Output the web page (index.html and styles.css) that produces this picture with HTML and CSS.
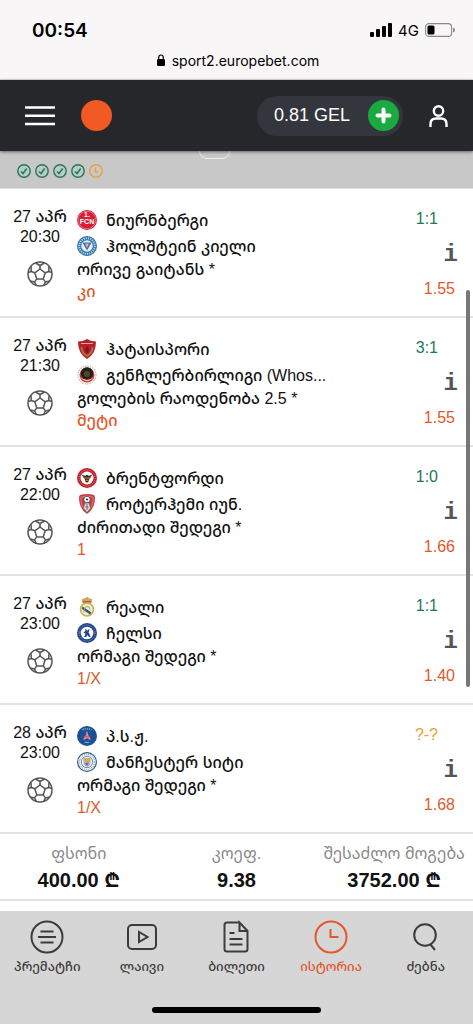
FILE: index.html
```
<!DOCTYPE html>
<html lang="ka">
<head>
    <meta charset="UTF-8">
    <meta name="viewport" content="width=device-width, initial-scale=1.0">
    <title>ისტორია</title>
    <link rel="stylesheet" href="styles.css">
</head>
<body>
    <!-- shared icons -->
    <svg class="sprite" aria-hidden="true">
        <symbol id="ball" viewBox="0 0 26 26">
            <g fill="none" stroke="#555" stroke-width="1.5" stroke-linejoin="round">
                <circle cx="13" cy="13" r="12"/>
                <path d="M13 8l5.2 3.8-2 6.1H9.800l-2-6.100z"/>
                <path d="M13 8V4.500M18.200 11.800l3.500-1.300M16.200 17.900l2.300 3M9.800 17.900l-2.300 3M7.800 11.800l-3.500-1.300"/>
                <path d="M8.500 2l4.500 2.500L17.500 2M24.900 11.500l-3.200-1 .3-5M22.500 20l-4 .9-1.800 3.500M3.500 20l4 .9 1.800 3.500M1.100 11.500l3.200-1-.3-5"/>
            </g>
        </symbol>
        <symbol id="won" viewBox="0 0 14 14">
            <circle cx="7" cy="7" r="6.200" fill="#b5cfc4" stroke="#2b7458" stroke-width="1.400"/>
            <path d="M4 7.500l2 2L9.700 4.500" fill="none" stroke="#2b7458" stroke-width="1.500"/>
        </symbol>
    </svg>

    <div class="status">
        <div class="status-row">
            <span class="clock">00:54</span>
            <div class="signal">
                <svg width="22" height="14" viewBox="0 0 22 14">
                    <rect x="0" y="9" width="4" height="5" rx="1"/>
                    <rect x="6" y="6" width="4" height="8" rx="1"/>
                    <rect x="12" y="3" width="4" height="11" rx="1"/>
                    <rect x="18" y="0" width="4" height="14" rx="1"/>
                </svg>
                <span>4G</span>
                <svg width="30" height="14" viewBox="0 0 30 14">
                    <rect x=".6" y=".6" width="26" height="12.800" rx="3.500" fill="none" stroke="#888" stroke-width="1.100"/>
                    <rect x="2.500" y="2.500" width="7" height="9" rx="1.500"/>
                    <path d="M28 4.500q2 .5 2 2.500t-2 2.500z" fill="#888"/>
                </svg>
            </div>
        </div>
        <div class="address">
            <svg width="8" height="12" viewBox="0 0 8 12">
                <rect y="5" width="8" height="7" rx="1.200"/>
                <path d="M1.700 5.500V3.300a2.300 2.300 0 0 1 4.600 0v2.200" fill="none" stroke="#000" stroke-width="1.200"/>
            </svg>
            <span>sport2.europebet.com</span>
        </div>
    </div>

    <header class="header">
        <button class="icon-btn" type="button" aria-label="მენიუ">
            <svg width="30" height="20" viewBox="0 0 30 20">
                <path d="M0 1.500h30M0 9.700h30M0 18h30" stroke="#fff" stroke-width="2.600"/>
            </svg>
        </button>
        <a class="logo" href="#" aria-label="europebet"></a>
        <button class="balance" type="button">
            <span>0.81 GEL</span>
            <svg width="31" height="31" viewBox="0 0 31 31">
                <circle cx="15.500" cy="15.500" r="15.500" fill="#19ab3f"/>
                <path d="M15.500 9.500v12M9.500 15.500h12" stroke="#fff" stroke-width="4" stroke-linecap="round"/>
            </svg>
        </button>
        <button class="icon-btn" type="button" aria-label="პროფილი">
            <svg width="19" height="22" viewBox="0 0 19 22" fill="none" stroke="#fff" stroke-width="2.400">
                <circle cx="9.500" cy="6" r="4.700"/>
                <path d="M1.500 22v-3q0-5.500 5.500-5.500h5q5.500 0 5.500 5.500v3"/>
            </svg>
        </button>
    </header>

    <main class="ticket">
        <div class="ticket-head">
            <svg><use href="#won"/></svg>
            <svg><use href="#won"/></svg>
            <svg><use href="#won"/></svg>
            <svg><use href="#won"/></svg>
            <svg viewBox="0 0 14 14" fill="none" stroke="#e9a144" stroke-width="1.400">
                <circle cx="7" cy="7" r="6.200"/>
                <path d="M6.500 3.500V8H9.500"/>
            </svg>
            <span class="toggle"></span>
        </div>

        <article class="event">
            <div class="when">
                <span>27 აპრ</span>
                <span>20:30</span>
                <svg class="sport"><use href="#ball"/></svg>
            </div>
            <div class="bet">
                <div class="team">
                    <svg class="crest" viewBox="0 0 20 20">
                        <circle cx="10" cy="10" r="10" fill="#d71f36"/>
                        <circle cx="10" cy="10" r="8.800" fill="none" stroke="#f0a6ad" stroke-width=".5"/>
                        <text x="10" y="7" class="crest-text">1.</text>
                        <text x="10" y="14" class="crest-text">FCN</text>
                    </svg>
                    <span>ნიურნბერგი</span>
                </div>
                <div class="team">
                    <svg class="crest" viewBox="0 0 20 20">
                        <circle cx="10" cy="10" r="10" fill="#3475a8"/>
                        <circle cx="10" cy="10" r="7.800" fill="none" stroke="#b9d3e6" stroke-width="2" stroke-dasharray="1.200 1"/>
                        <circle cx="10" cy="10" r="5.800" fill="#e5eef5"/>
                        <path d="M5.500 6.500h9L10 14.500z" fill="#3475a8"/>
                        <path d="M8 7.500h4l-2 4.500z" fill="#e7a6ae"/>
                    </svg>
                    <span>ჰოლშტეინ კიელი</span>
                </div>
                <p class="market">ორივე გაიტანს *</p>
                <p class="pick">კი</p>
            </div>
            <div class="result">
                <span class="score">1:1</span>
                <button class="info" type="button">i</button>
                <span class="odds">1.55</span>
            </div>
        </article>

        <article class="event">
            <div class="when">
                <span>27 აპრ</span>
                <span>21:30</span>
                <svg class="sport"><use href="#ball"/></svg>
            </div>
            <div class="bet">
                <div class="team">
                    <svg class="crest" viewBox="0 0 20 20">
                        <path d="M1 2.500Q6 2.500 10 0q4 2.500 9 2.500Q19 15 10 20 1 15 1 2.500z" fill="#b51f2b"/>
                        <path d="M4 4.500h12" stroke="#e4a7a3" stroke-width="1"/>
                        <path d="M4.500 8q0 6 5.500 9 5.500-3 5.500-9" fill="none" stroke="#b0763f" stroke-width="1.800"/>
                        <path d="M10 7l2 3-1 4h-2l-1-4z" fill="#7c1620"/>
                    </svg>
                    <span>ჰატაისპორი</span>
                </div>
                <div class="team">
                    <svg class="crest" viewBox="0 0 20 20">
                        <circle cx="10" cy="10" r="9" fill="#fff" stroke="#c9bfb2" stroke-width="1.300" stroke-dasharray="1.500 1"/>
                        <circle cx="10" cy="10" r="7.500" fill="#d8322b"/>
                        <circle cx="10" cy="8.500" r="6.200" fill="#20211a"/>
                        <circle cx="10" cy="9" r="3" fill="#4a4a25"/>
                        <path d="M3 12q7 6 14 0-7 8-14 0z" fill="#f6d8cb"/>
                    </svg>
                    <span>გენჩლერბირლიგი (Whos...</span>
                </div>
                <p class="market">გოლების რაოდენობა 2.5 *</p>
                <p class="pick">მეტი</p>
            </div>
            <div class="result">
                <span class="score">3:1</span>
                <button class="info" type="button">i</button>
                <span class="odds">1.55</span>
            </div>
        </article>

        <article class="event">
            <div class="when">
                <span>27 აპრ</span>
                <span>22:00</span>
                <svg class="sport"><use href="#ball"/></svg>
            </div>
            <div class="bet">
                <div class="team">
                    <svg class="crest" viewBox="0 0 20 20">
                        <circle cx="10" cy="10" r="10" fill="#c2222e"/>
                        <circle cx="10" cy="10" r="8" fill="none" stroke="#dc7c82" stroke-width="1" stroke-dasharray="1 1"/>
                        <circle cx="10" cy="10" r="6.500" fill="#fff"/>
                        <path d="M4.500 6.500L9 8h2l4.500-1.500-2.500 4h-6z" fill="#4c4a42"/>
                        <ellipse cx="10" cy="10.800" rx="2.200" ry="3.800" fill="#2a2114"/>
                        <path d="M8 10h4M8.200 12.300h3.600" stroke="#d9a02c" stroke-width="1"/>
                    </svg>
                    <span>ბრენტფორდი</span>
                </div>
                <div class="team">
                    <svg class="crest" viewBox="0 0 20 20">
                        <path d="M3 1q7-2 14 0l1 2q0 12-8 17-8-5-8-17z" fill="#c83d43"/>
                        <path d="M4 3q6-2 12 0 1 9-6 15-7-6-6-15z" fill="none" stroke="#e6a3a3" stroke-width=".6"/>
                        <circle cx="10" cy="5.500" r="3.200" fill="#fff" stroke="#333" stroke-width=".7"/>
                        <circle cx="10" cy="5.500" r="1.100" fill="#333"/>
                        <path d="M8 9h4l1.500 5-3.500 4.500L6.500 14z" fill="#ddd" stroke="#555" stroke-width=".6"/>
                        <path d="M10 10v6M8.500 13h3" stroke="#555" stroke-width=".8"/>
                    </svg>
                    <span>როტერჰემი იუნ.</span>
                </div>
                <p class="market">ძირითადი შედეგი *</p>
                <p class="pick">1</p>
            </div>
            <div class="result">
                <span class="score">1:0</span>
                <button class="info" type="button">i</button>
                <span class="odds">1.66</span>
            </div>
        </article>

        <article class="event">
            <div class="when">
                <span>27 აპრ</span>
                <span>23:00</span>
                <svg class="sport"><use href="#ball"/></svg>
            </div>
            <div class="bet">
                <div class="team">
                    <svg class="crest" viewBox="0 0 20 20">
                        <path d="M5.500 6L4.500 2.500Q10-1 15.500 2.500L14.500 6z" fill="#d8a75a"/>
                        <path d="M6 4.700h8" stroke="#b5484c" stroke-width="1.200"/>
                        <path d="M10 0v2" stroke="#b28a3e"/>
                        <circle cx="10" cy="12.500" r="6.500" fill="#f1ecc9" stroke="#c3b151" stroke-width="1.500"/>
                        <path d="M5.500 9.500l9 6-1.500 2-8-5.500z" fill="#34538c"/>
                        <path d="M7 15.500q0-6 3-6t3 3" fill="none" stroke="#b6a552" stroke-width="1"/>
                    </svg>
                    <span>რეალი</span>
                </div>
                <div class="team">
                    <svg class="crest" viewBox="0 0 20 20">
                        <circle cx="10" cy="10" r="10" fill="#20448b"/>
                        <circle cx="10" cy="10" r="8" fill="none" stroke="#8296c0" stroke-width="1" stroke-dasharray="1 1"/>
                        <circle cx="10" cy="10" r="6.300" fill="#fff"/>
                        <path d="M8 6l1.500.5.5 1.500 2-2 .5 1-1 2.500 1 1.500 1 3h-1.500l-1.500-2-1.500 2H7l1.500-3-.5-1-1.500.5.5-1.500 1.500-1z" fill="#20448b"/>
                        <circle cx="2.500" cy="10" r="1" fill="#ca5361"/>
                        <circle cx="17.500" cy="10" r="1" fill="#ca5361"/>
                    </svg>
                    <span>ჩელსი</span>
                </div>
                <p class="market">ორმაგი შედეგი *</p>
                <p class="pick">1/X</p>
            </div>
            <div class="result">
                <span class="score">1:1</span>
                <button class="info" type="button">i</button>
                <span class="odds">1.40</span>
            </div>
        </article>

        <article class="event">
            <div class="when">
                <span>28 აპრ</span>
                <span>23:00</span>
                <svg class="sport"><use href="#ball"/></svg>
            </div>
            <div class="bet">
                <div class="team">
                    <svg class="crest" viewBox="0 0 20 20">
                        <circle cx="10" cy="10" r="10" fill="#1c5297"/>
                        <path d="M5.500 4q4.500-2.500 9 0" fill="none" stroke="#a9c3e2" stroke-width="1.500" stroke-dasharray="1.500 .7"/>
                        <path d="M10 4.500q.5 5 4 9h-2q-2-2.500-4 0H6q3.500-4 4-9z" fill="#e98a92"/>
                        <path d="M7.500 10.500h5" stroke="#d9545c" stroke-width="1.200"/>
                        <path d="M7.500 16.500h5" stroke="#a9c3e2" stroke-width="1.200"/>
                        <circle cx="10" cy="10" r="7.300" fill="none" stroke="#164383" stroke-width=".6"/>
                    </svg>
                    <span>პ.ს.ჟ.</span>
                </div>
                <div class="team">
                    <svg class="crest" viewBox="0 0 20 20">
                        <circle cx="10" cy="10" r="9.400" fill="#fff" stroke="#315a85" stroke-width="1.200"/>
                        <circle cx="10" cy="10" r="7.500" fill="none" stroke="#94a7bd" stroke-width="1.500" stroke-dasharray="1 1"/>
                        <circle cx="10" cy="10" r="5.700" fill="#f4f5f7" stroke="#315a85" stroke-width=".7"/>
                        <path d="M6.500 6h7v4.500q0 3-3.500 4.500-3.500-1.500-3.500-4.500z" fill="#8cb6da"/>
                        <path d="M7 6.500h6v3.500H7z" fill="#dba94c"/>
                        <circle cx="10" cy="12" r="1.300" fill="#c04b50"/>
                    </svg>
                    <span>მანჩესტერ სიტი</span>
                </div>
                <p class="market">ორმაგი შედეგი *</p>
                <p class="pick">1/X</p>
            </div>
            <div class="result">
                <span class="score pending">?-?</span>
                <button class="info" type="button">i</button>
                <span class="odds">1.68</span>
            </div>
        </article>

        <dl class="summary">
            <div>
                <dt>ფსონი</dt>
                <dd>400.00 ₾</dd>
            </div>
            <div>
                <dt>კოეფ.</dt>
                <dd>9.38</dd>
            </div>
            <div>
                <dt>შესაძლო მოგება</dt>
                <dd>3752.00 ₾</dd>
            </div>
        </dl>
        <div class="scrollbar"></div>
    </main>

    <footer class="footer">
        <nav class="tabs">
            <a href="#">
                <svg viewBox="0 0 34 34">
                    <circle cx="17" cy="17" r="15.500"/>
                    <path d="M10.500 11.500h13M8 17h18M10.500 22.500h13"/>
                </svg>
                <span>პრემატჩი</span>
            </a>
            <a href="#">
                <svg viewBox="0 0 34 34">
                    <rect x="3" y="5" width="28" height="24" rx="4"/>
                    <path d="M14 12v10l8.500-5z"/>
                </svg>
                <span>ლაივი</span>
            </a>
            <a href="#">
                <svg viewBox="0 0 34 34">
                    <path d="M20.500 2.500H8q-2.500 0-2.500 2.500v24q0 2.500 2.500 2.500h18q2.500 0 2.500-2.500V11l-8-8.500V11h8"/>
                    <path d="M10.500 13h5M10.500 19h13M10.500 24.500h13"/>
                </svg>
                <span>ბილეთი</span>
            </a>
            <a href="#" class="active">
                <svg viewBox="0 0 34 34">
                    <circle cx="17" cy="17" r="15.500"/>
                    <path d="M16.500 9v8h8"/>
                </svg>
                <span>ისტორია</span>
            </a>
            <a href="#">
                <svg viewBox="0 0 34 34">
                    <circle cx="16" cy="15" r="10.800"/>
                    <path d="M21.500 24.500l4.500 5.500"/>
                </svg>
                <span>ძებნა</span>
            </a>
        </nav>
        <div class="home-bar"></div>
    </footer>
</body>
</html>
```
FILE: styles.css
```
* {
    box-sizing: border-box;
    margin: 0;
    padding: 0;
}

body {
    min-height: 100vh;
    display: flex;
    flex-direction: column;
    background: #fff;
    color: #111;
    font-family: "Liberation Sans", "Noto Sans Georgian", "DejaVu Sans", sans-serif;
    font-size: 16px;
    font-weight: 500;
}

button {
    border: none;
    background: none;
    font-family: inherit;
    cursor: pointer;
}

a {
    color: inherit;
    text-decoration: none;
}

svg {
    display: block;
    flex-shrink: 0;
}

.sprite {
    position: absolute;
    width: 0;
    height: 0;
}

/* phone status bar */
.status {
    height: 80px;
    padding-top: 18px;
    background: #f8f6f7;
    border-bottom: 1px solid #ddd;
    color: #000;
    font-family: Inter, sans-serif;
    font-weight: 400;
}

.status-row {
    display: flex;
    align-items: center;
    justify-content: space-between;
    height: 24px;
    padding: 0 18px 0 32px;
}

.clock {
    font-size: 19px;
    font-weight: 600;
}

.signal {
    display: flex;
    align-items: center;
    gap: 6px;
    font-size: 15px;
}

.address {
    display: flex;
    align-items: center;
    justify-content: center;
    gap: 7px;
    height: 36px;
    padding-left: 3px;
    font-size: 14px;
}

/* site header */
.header {
    position: relative;
    z-index: 1;
    display: flex;
    align-items: center;
    height: 71px;
    padding: 0 25px;
    background: #26272b;
    box-shadow: 0 1px 3px rgba(0, 0, 0, 0.5);
}

.logo {
    width: 31px;
    height: 31px;
    margin-left: 26px;
    margin-right: auto;
    border-radius: 50%;
    background: #f15a22;
}

.balance {
    display: flex;
    align-items: center;
    gap: 18px;
    height: 40px;
    margin-right: 26px;
    padding: 0 4px 0 17px;
    border-radius: 20px;
    background: #34363d;
    color: #fff;
    font-size: 18px;
}

/* ticket */
.ticket {
    position: relative;
    flex: 1;
}

.ticket-head {
    position: relative;
    display: flex;
    align-items: center;
    gap: 4px;
    height: 38px;
    padding: 2px 17px 0;
    background: #c8c8c8;
    border-bottom: 1px solid #e0e0e0;
}

.ticket-head svg {
    width: 14px;
    height: 14px;
}

.toggle {
    position: absolute;
    top: -18px;
    left: 42%;
    width: 31px;
    height: 26px;
    border: 1px solid #eee;
    border-radius: 8px;
}

.event {
    display: flex;
    height: 129px;
    padding: 18px 18px 0 13px;
    border-bottom: 2px solid #e2e2e2;
}

.when {
    display: flex;
    flex-direction: column;
    align-items: center;
    width: 54px;
    margin-right: 10px;
    line-height: 20px;
    white-space: nowrap;
}

.sport {
    width: 26px;
    height: 26px;
    margin-top: 14px;
}

.bet {
    flex: 1;
    min-width: 0;
}

.team {
    display: flex;
    align-items: center;
    gap: 9px;
    height: 26px;
    white-space: nowrap;
}

.crest {
    width: 20px;
    height: 20px;
}

.crest-text {
    fill: #fff;
    font-size: 7px;
    font-weight: bold;
    text-anchor: middle;
}

.market {
    line-height: 22px;
}

.pick {
    line-height: 22px;
    color: #e2582c;
}

.result {
    display: flex;
    flex-direction: column;
    align-items: flex-end;
    line-height: 24px;
}

.score {
    margin-right: 17px;
    color: #23785a;
}

.pending {
    color: #e9a12f;
}

.info {
    height: 46px;
    color: #555;
    font-family: "Liberation Mono", monospace;
    font-size: 24px;
    font-weight: bold;
    margin-right: -3px;
}

.odds {
    color: #e2582c;
}

.summary {
    display: grid;
    grid-template-columns: repeat(3, 1fr);
    height: 67px;
    padding-top: 7px;
    border-bottom: 2px solid #e2e2e2;
    text-align: center;
    white-space: nowrap;
}

.summary dt {
    color: #888;
    font-weight: 400;
    line-height: 26px;
}

.summary dd {
    font-size: 20px;
    font-weight: bold;
    line-height: 26px;
}

.scrollbar {
    position: absolute;
    top: 139px;
    right: 3px;
    width: 4px;
    height: 397px;
    border-radius: 2px;
    background: #777;
}

/* bottom navigation */
.footer {
    height: 113px;
    background: #d6d6d6;
}

.tabs {
    display: grid;
    grid-template-columns: repeat(5, 1fr);
    height: 96px;
    padding-top: 9px;
}

.tabs a {
    display: flex;
    flex-direction: column;
    align-items: center;
    color: #3c3c3c;
    font-size: 13px;
    line-height: 26px;
}

.tabs svg {
    width: 34px;
    height: 34px;
    fill: none;
    stroke: currentColor;
    stroke-width: 2;
}

.tabs .active {
    color: #e2582c;
}

.home-bar {
    width: 169px;
    height: 6px;
    margin: 0 auto;
    border-radius: 3px;
    background: #000;
}
```
